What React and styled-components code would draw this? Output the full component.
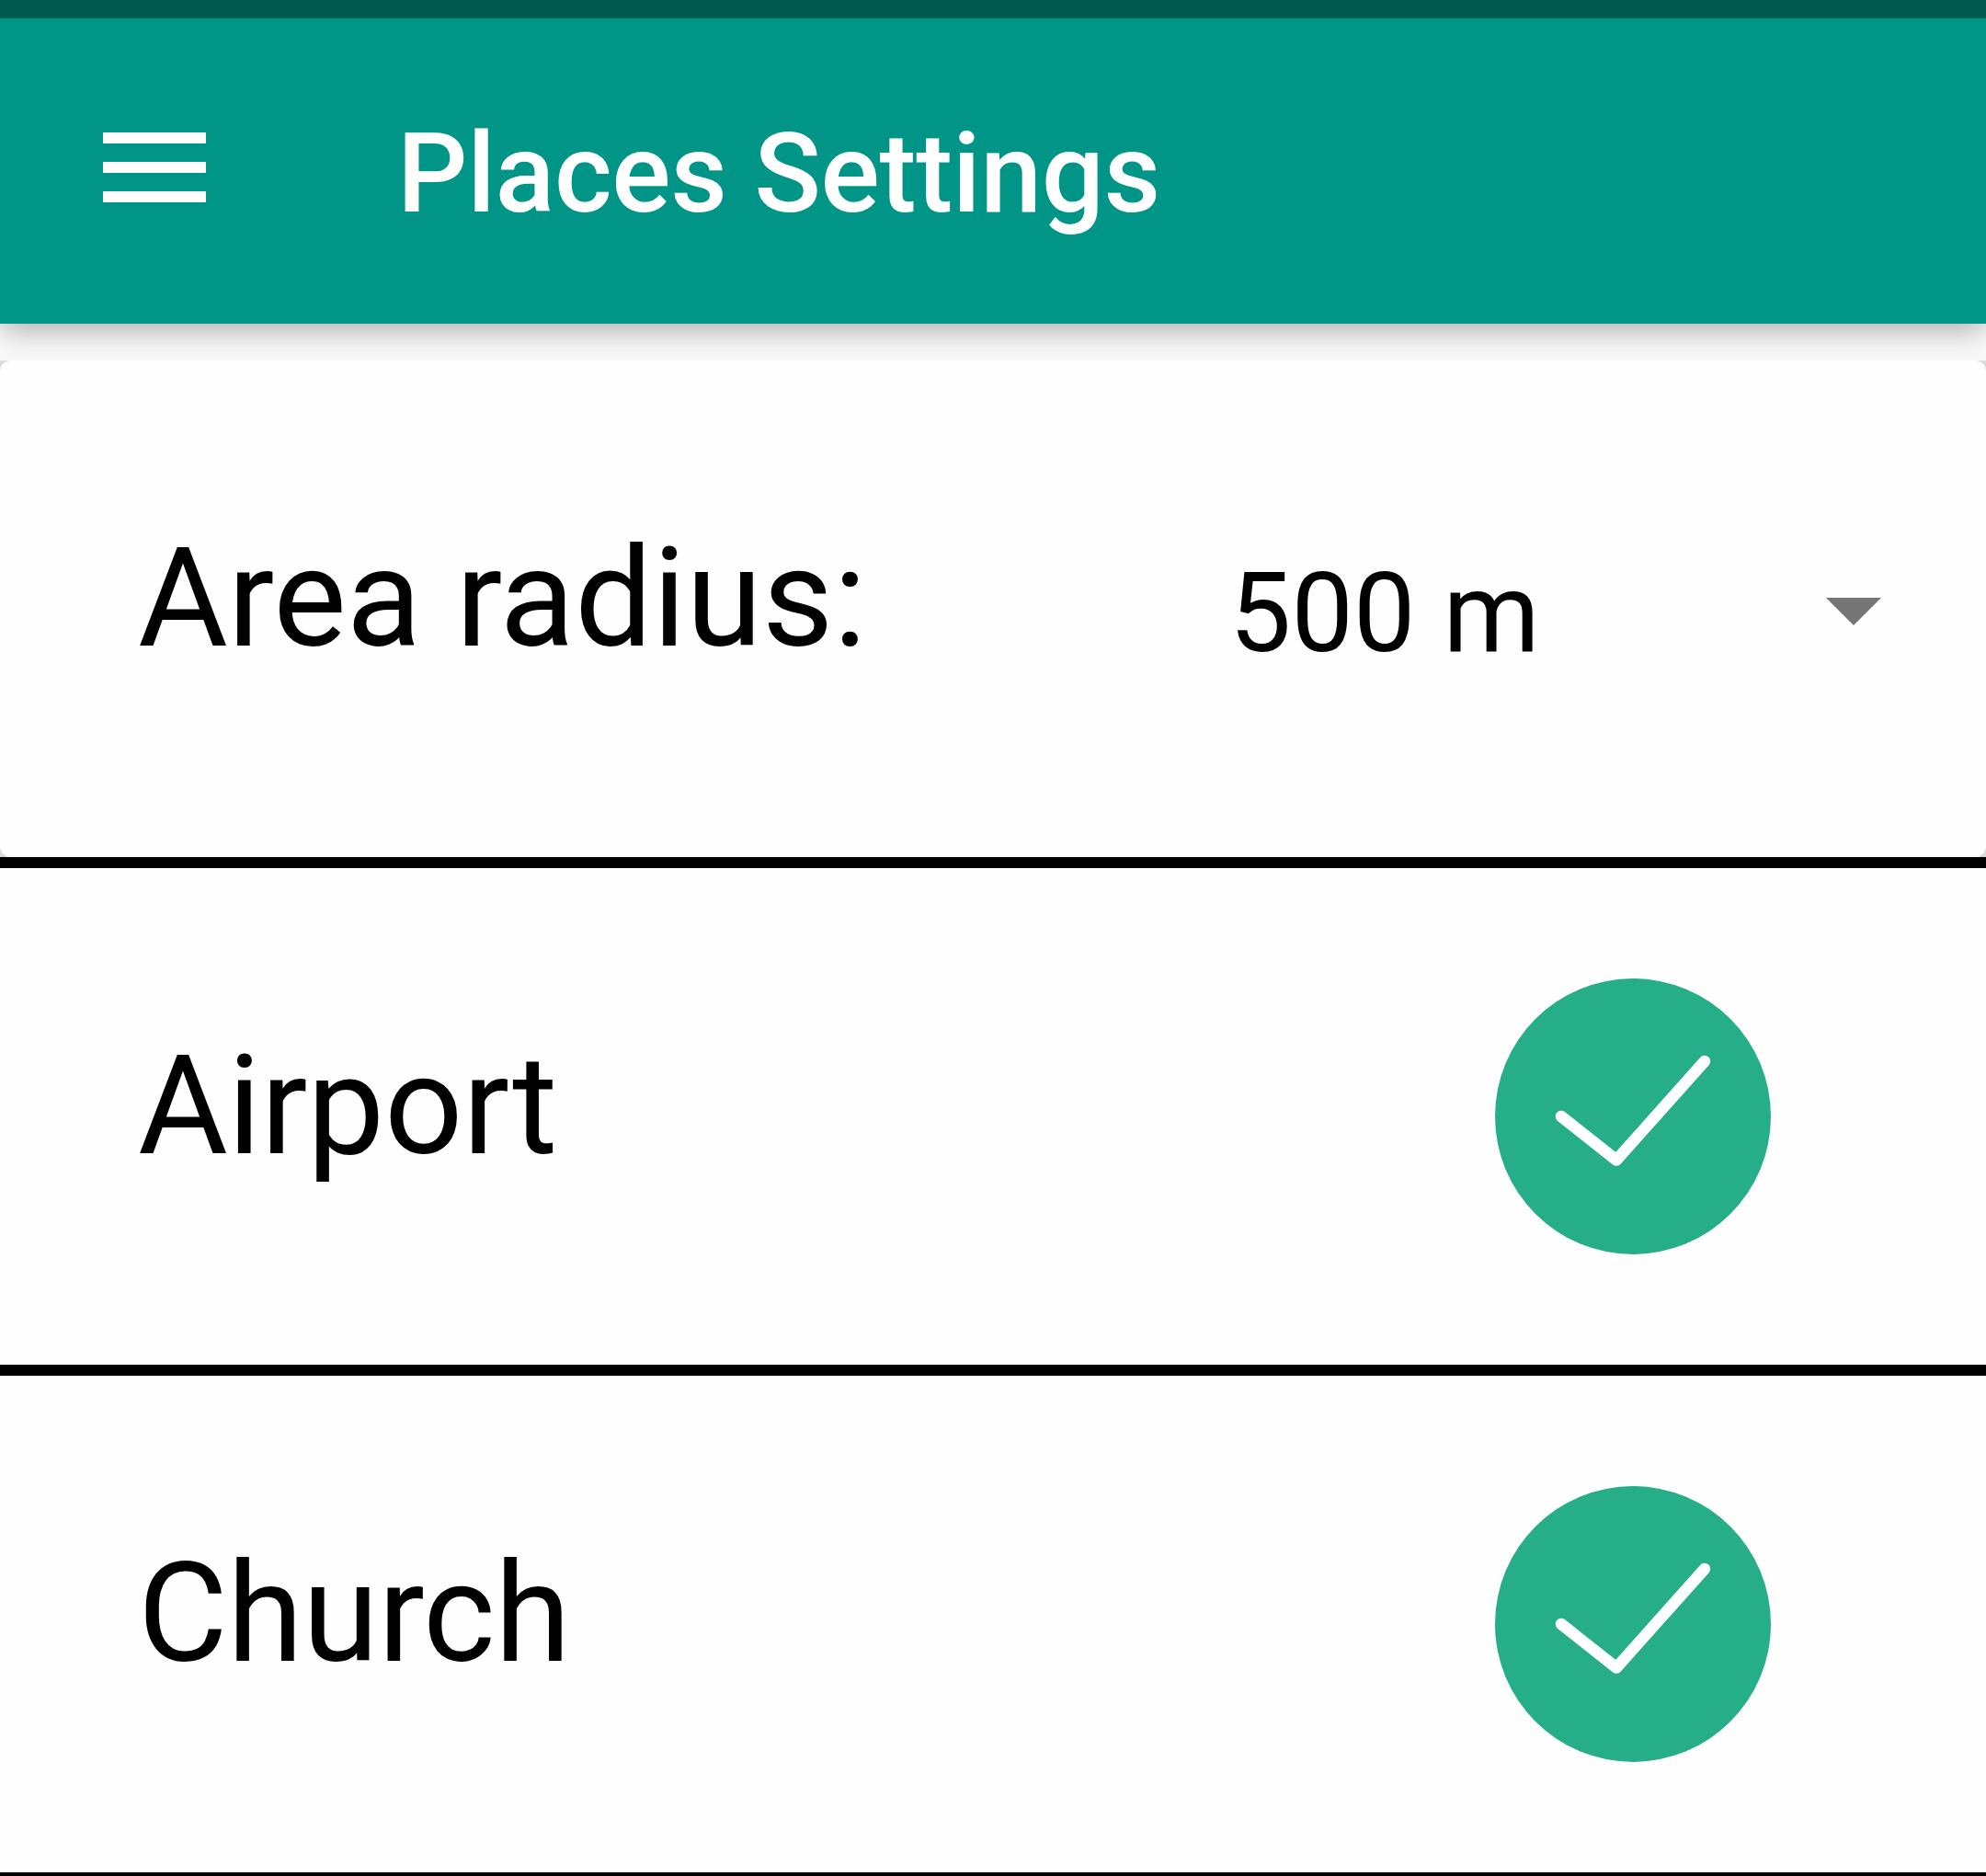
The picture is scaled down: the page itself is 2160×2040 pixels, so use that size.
import React from 'react';
import styled, { createGlobalStyle } from 'styled-components';

const GlobalStyle = createGlobalStyle`
  html, body {
    margin: 0;
    padding: 0;
    background: #f9f9f9;
    overflow: hidden;
  }
`;

const Screen = styled.div`
  display: flex;
  flex-direction: column;
  width: 2160px;
  height: 2040px;
  overflow: hidden;
  background: #f9f9f9;
  color: #000;
  font-family: Roboto, "Liberation Sans", sans-serif;
`;

const StatusBar = styled.div`
  flex: none;
  height: 20px;
  background: #00594f;
`;

const AppBar = styled.header`
  flex: none;
  display: flex;
  align-items: flex-start;
  box-sizing: border-box;
  height: 332px;
  padding-left: 112px;
  background: #009587;
  box-shadow: 0 6px 32px -1px rgba(0, 0, 0, 0.34);
  clip-path: inset(0 0 -40px 0);
`;

const MenuButton = styled.button`
  display: flex;
  flex-direction: column;
  gap: 20px;
  width: 112px;
  margin: 124px 0 0;
  padding: 0;
  border: 0;
  background: none;
`;

const MenuBar = styled.span`
  height: 12px;
  background: #fff;
`;

const Title = styled.h1`
  margin: 99px 0 0 208px;
  font-size: 120px;
  line-height: 140px;
  font-weight: 500;
  letter-spacing: -0.3px;
  color: #fff;
  white-space: nowrap;
`;

const List = styled.main`
  flex: none;
  display: flex;
  flex-direction: column;
  margin-top: 40px;
  isolation: isolate;
`;

const Frame = styled.div`
  flex: none;
  background: ${(p) => (p.$rounded ? '#dcdcdc' : '#fefefe')};
  border-bottom: 12px solid #000;
`;

const Row = styled.div`
  display: flex;
  align-items: flex-start;
  justify-content: space-between;
  box-sizing: border-box;
  height: 540px;
  padding-left: 150px;
  padding-right: ${(p) => p.$inset}px;
  border-radius: ${(p) => (p.$rounded ? 12 : 0)}px;
  background: #fefefe;
`;

const Label = styled.span`
  margin-top: 171px;
  font-size: 150px;
  line-height: 176px;
  letter-spacing: ${(p) => p.$tracking || 0}px;
  white-space: nowrap;
`;

const Spinner = styled.div`
  display: flex;
  align-items: flex-start;
  justify-content: space-between;
  width: 709px;
  margin-top: 205px;
`;

const Value = styled.span`
  font-size: 120px;
  line-height: 140px;
  letter-spacing: 0.1px;
  white-space: nowrap;
`;

const Arrow = styled.svg`
  width: 60px;
  height: 30px;
  margin-top: 53px;
  fill: #757575;
`;

const CheckIcon = styled.svg`
  width: 300px;
  height: 300px;
  margin-top: 120px;
`;

function Check() {
  return (
    <CheckIcon viewBox="0 0 300 300">
      <circle cx="150" cy="150" r="150" fill="#26ae88" />
      <path
        d="M72 150 L132 197.5 L228 90"
        fill="none"
        stroke="#fff"
        strokeWidth="12.5"
        strokeLinecap="round"
        strokeLinejoin="round"
      />
    </CheckIcon>
  );
}

const places = [
  { name: 'Airport', tracking: -0.35 },
  { name: 'Church', tracking: -0.6 },
];

export default function App() {
  return (
    <Screen>
      <GlobalStyle />
      <StatusBar />
      <AppBar>
        <MenuButton aria-label="Menu">
          <MenuBar />
          <MenuBar />
          <MenuBar />
        </MenuButton>
        <Title>Places Settings</Title>
      </AppBar>
      <List>
        <Frame $rounded>
          <Row $rounded $inset={114}>
            <Label>Area radius:</Label>
            <Spinner>
              <Value>500 m</Value>
              <Arrow viewBox="0 0 60 30">
                <path d="M0 0 H60 L30 30 Z" />
              </Arrow>
            </Spinner>
          </Row>
        </Frame>
        {places.map(({ name, tracking }) => (
          <Frame key={name}>
            <Row $inset={234}>
              <Label $tracking={tracking}>{name}</Label>
              <Check />
            </Row>
          </Frame>
        ))}
      </List>
    </Screen>
  );
}
